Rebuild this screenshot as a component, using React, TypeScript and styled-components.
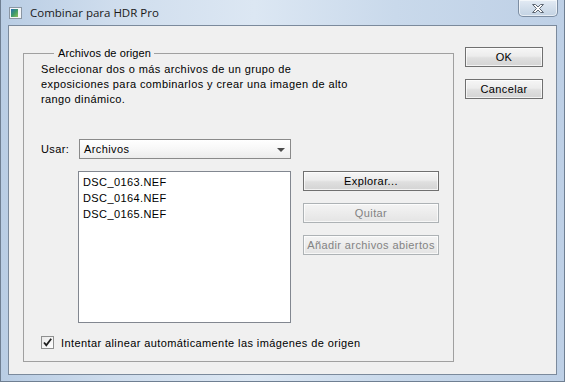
import styled, { createGlobalStyle } from 'styled-components';

const GlobalStyle = createGlobalStyle`
  html, body {
    margin: 0;
    padding: 0;
    width: 565px;
    height: 382px;
    overflow: hidden;
  }
  body {
    font-family: "Liberation Sans", Arial, sans-serif;
    font-size: 11px;
    letter-spacing: 0.4px;
    color: #000;
  }
`;

const files = ['DSC_0163.NEF', 'DSC_0164.NEF', 'DSC_0165.NEF'];

const App = () => {
  return (
    <>
      <GlobalStyle />
      <Frame>
        <TitleBar>
          <AppIcon>
            <svg width="13" height="12" viewBox="0 0 13 12">
              <rect x="0.5" y="0.5" width="12" height="11" fill="#f4f6f8" stroke="#8b96a3" />
              <defs>
                <linearGradient id="ico" x1="0" y1="0" x2="1" y2="1">
                  <stop offset="0" stopColor="#2a6db5" />
                  <stop offset="0.5" stopColor="#3f9a6a" />
                  <stop offset="1" stopColor="#8fc15a" />
                </linearGradient>
              </defs>
              <rect x="2" y="2" width="7" height="8" fill="url(#ico)" />
            </svg>
          </AppIcon>
          <Title>Combinar para HDR Pro</Title>
          <CloseButton>
            <svg width="14" height="11" viewBox="0 0 14 11">
              <path
                d="M1.5 1.5 h3 l2.5 2.5 l2.5 -2.5 h3 l-4 4 l4 4 h-3 l-2.5 -2.5 l-2.5 2.5 h-3 l4 -4 z"
                fill="#fdfdfd"
                stroke="#5d6672"
                strokeWidth="1"
                strokeLinejoin="round"
              />
            </svg>
          </CloseButton>
        </TitleBar>
        <Client>
          <GroupBox>
            <Legend>Archivos de origen</Legend>
            <Description>
              Seleccionar dos o más archivos de un grupo de
              <br />
              exposiciones para combinarlos y crear una imagen de alto
              <br />
              rango dinámico.
            </Description>
            <UseRow>
              <FieldLabel>Usar:</FieldLabel>
              <Select>
                <span>Archivos</span>
                <Arrow />
              </Select>
            </UseRow>
            <FilesRow>
              <FileList>
                {files.map((f) => (
                  <FileItem key={f}>{f}</FileItem>
                ))}
              </FileList>
              <SideButtons>
                <PushButton>Explorar...</PushButton>
                <PushButton disabled>Quitar</PushButton>
                <PushButton disabled>Añadir archivos abiertos</PushButton>
              </SideButtons>
            </FilesRow>
            <CheckRow>
              <CheckBox>
                <svg width="11" height="11" viewBox="0 0 11 11">
                  <path d="M2 5.5 L4.3 8.2 L9.2 1.8" fill="none" stroke="#1f1f1f" strokeWidth="1.8" />
                </svg>
              </CheckBox>
              <span>Intentar alinear automáticamente las imágenes de origen</span>
            </CheckRow>
          </GroupBox>
          <DialogButtons>
            <PushButton $wide>OK</PushButton>
            <PushButton $wide>Cancelar</PushButton>
          </DialogButtons>
        </Client>
      </Frame>
    </>
  );
};

export default App;

const Frame = styled.div`
  width: 565px;
  height: 382px;
  box-sizing: border-box;
  padding: 0 7px 6px 7px;
  display: flex;
  flex-direction: column;
  background: linear-gradient(90deg, #b9cde4 0%, #cfdded 20%, #dce7f3 45%, #c9d9eb 70%, #bed0e6 100%);
  border-left: 1px solid #6f7f92;
  border-right: 1px solid #6f7f92;
  border-bottom: 1px solid #6f7f92;
`;

const TitleBar = styled.div`
  height: 25px;
  display: flex;
  align-items: flex-start;
`;

const AppIcon = styled.div`
  margin-top: 7px;
  margin-left: 1px;
  width: 13px;
  height: 12px;
  display: flex;
`;

const Title = styled.div`
  margin-left: 8px;
  margin-top: 5px;
  font-family: "Open Sans", "Noto Sans", sans-serif;
  font-size: 11.5px;
  letter-spacing: 0;
  color: #1a1a1a;
`;

const CloseButton = styled.div`
  margin-left: auto;
  margin-right: -1px;
  width: 40px;
  height: 17px;
  box-sizing: border-box;
  border: 1px solid #7d8ea3;
  border-top: none;
  border-radius: 0 0 5px 5px;
  background: linear-gradient(180deg, #e3ebf4 0%, #d2deeb 50%, #c3d2e3 100%);
  box-shadow: inset 0 0 0 1px rgba(255, 255, 255, 0.6);
  display: flex;
  align-items: center;
  justify-content: center;
`;

const Client = styled.div`
  flex: 1;
  background: #f0f0f0;
  border: 1px solid #7b8a9c;
  display: flex;
  align-items: flex-start;
  padding: 21px 13px 0 14px;
`;

const GroupBox = styled.fieldset`
  margin: 0;
  width: 433px;
  height: 315px;
  box-sizing: border-box;
  border: 1px solid #a0a0a0;
  border-radius: 0;
  padding: 2px 0 0 17px;
  display: flex;
  flex-direction: column;
`;

const Legend = styled.legend`
  margin-left: 13px;
  padding: 0 3px 0 4px;
  font-size: 11px;
  letter-spacing: 0.1px;
  line-height: 13px;
`;

const Description = styled.p`
  margin: 0;
  line-height: 15px;
  font-size: 11px;
`;

const UseRow = styled.div`
  margin-top: 32px;
  display: flex;
  align-items: center;
`;

const FieldLabel = styled.span`
  width: 38px;
`;

const Select = styled.div`
  width: 212px;
  height: 20px;
  box-sizing: border-box;
  border: 1px solid #8a8a8a;
  background: linear-gradient(180deg, #ffffff 0%, #f7f7f7 50%, #ececec 100%);
  display: flex;
  align-items: center;
  padding: 0 5px 0 4px;
  justify-content: space-between;
`;

const Arrow = styled.span`
  width: 0;
  height: 0;
  border-left: 4px solid transparent;
  border-right: 4px solid transparent;
  border-top: 4px solid #4a4a4a;
  margin-top: 2px;
`;

const FilesRow = styled.div`
  margin-top: 12px;
  margin-left: 37px;
  display: flex;
  align-items: flex-start;
  gap: 12px;
`;

const FileList = styled.div`
  width: 213px;
  height: 152px;
  box-sizing: border-box;
  border: 1px solid #828790;
  background: #ffffff;
  padding: 2px 4px;
  display: flex;
  flex-direction: column;
`;

const FileItem = styled.div`
  line-height: 16px;
`;

const SideButtons = styled.div`
  display: flex;
  flex-direction: column;
  gap: 12px;
`;

const PushButton = styled.button<{ $wide?: boolean }>`
  width: ${(p) => (p.$wide ? '78px' : '136px')};
  height: 20px;
  box-sizing: border-box;
  padding: 0;
  margin: 0;
  font-family: "Liberation Sans", Arial, sans-serif;
  font-size: 11px;
  letter-spacing: 0.4px;
  color: #000;
  border: 1px solid #707070;
  border-radius: 0;
  background: linear-gradient(180deg, #f6f6f6 0%, #ececec 45%, #dfdfdf 55%, #d4d4d4 100%);
  box-shadow: inset 0 0 0 1px rgba(255, 255, 255, 0.7);

  &:disabled {
    color: #838383;
    border-color: #adb2b5;
    background: linear-gradient(180deg, #f4f4f4 0%, #ececec 50%, #e4e4e4 100%);
  }
`;

const DialogButtons = styled.div`
  margin-left: 11px;
  display: flex;
  flex-direction: column;
  gap: 12px;
`;

const CheckRow = styled.div`
  margin-top: 13px;
  display: flex;
  align-items: center;
  gap: 7px;
`;

const CheckBox = styled.span`
  width: 13px;
  height: 13px;
  box-sizing: border-box;
  border: 1px solid #8e8f8f;
  background: linear-gradient(135deg, #e9e9e9 0%, #ffffff 100%);
  display: flex;
  align-items: center;
  justify-content: center;
`;
